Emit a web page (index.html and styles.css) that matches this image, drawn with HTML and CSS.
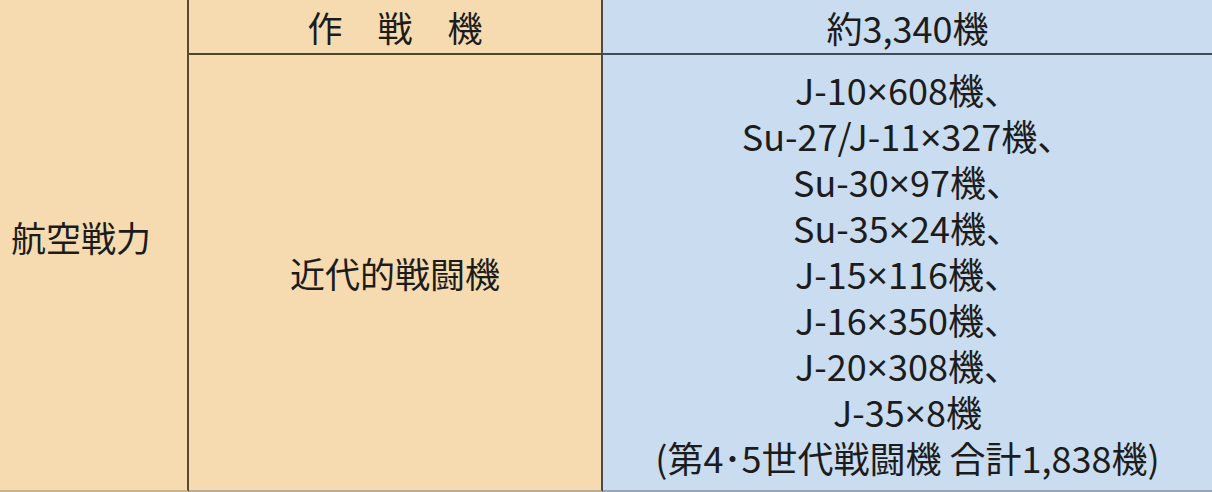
FILE: index.html
```html
<!DOCTYPE html>
<html lang="ja">
<head>
<meta charset="utf-8">
<link rel="stylesheet" href="styles.css">
</head>
<body>
<div class="table">
  <div class="cell cat">航空戦力</div>
  <div class="cell sub head">作　戦　機</div>
  <div class="cell val head">約3,340機</div>
  <div class="cell sub body">近代的戦闘機</div>
  <div class="cell val body">
    <div class="lines">
      <div>J-10<span class="x">×</span>608機、</div>
      <div>Su-27/J-11<span class="x">×</span>327機、</div>
      <div>Su-30<span class="x">×</span>97機、</div>
      <div>Su-35<span class="x">×</span>24機、</div>
      <div>J-15<span class="x">×</span>116機、</div>
      <div>J-16<span class="x">×</span>350機、</div>
      <div>J-20<span class="x">×</span>308機、</div>
      <div>J-35<span class="x">×</span>8機</div>
      <div>(第4･5世代戦闘機 合計1,838機)</div>
    </div>
  </div>
</div>
</body>
</html>
```

FILE: styles.css
```css
html, body {
  margin: 0;
  padding: 0;
  background: #f5dbaf;
}
body {
  width: 1212px;
  height: 492px;
  overflow: hidden;
  font-family: "Noto Sans CJK JP", "Noto Sans", sans-serif;
  color: #1c1c1c;
}
.table {
  display: grid;
  grid-template-columns: 189px 414px 1fr;
  grid-template-rows: 55px 437px;
  height: 492px;
}
.cell {
  display: flex;
  align-items: center;
  justify-content: center;
  box-sizing: border-box;
  font-size: 35px;
  line-height: 46px;
}
.cat {
  grid-row: 1 / 3;
  grid-column: 1;
  justify-content: flex-start;
  padding-left: 11px;
  padding-bottom: 16px;
  border-right: 2px solid #5a4a30;
  border-bottom: 2px solid #c9b48c;
  background: #f5dbaf;
}
.sub {
  background: #f5dbaf;
  border-right: 2px solid #4a4a46;
}
.val {
  background: #c9dcf0;
  font-size: 36px;
}
.x {
  font-family: "Noto Sans", sans-serif;
  font-size: 37px;
  line-height: 1;
}
.head {
  border-bottom: 2px solid #4f4632;
  padding-top: 1px;
}
.val.head {
  border-bottom-color: #3f4c5a;
}
.body {
  border-bottom: 2px solid #b8ad98;
}
.val.body {
  border-bottom-color: #9aa6b4;
}
.lines {
  text-align: center;
}
```
